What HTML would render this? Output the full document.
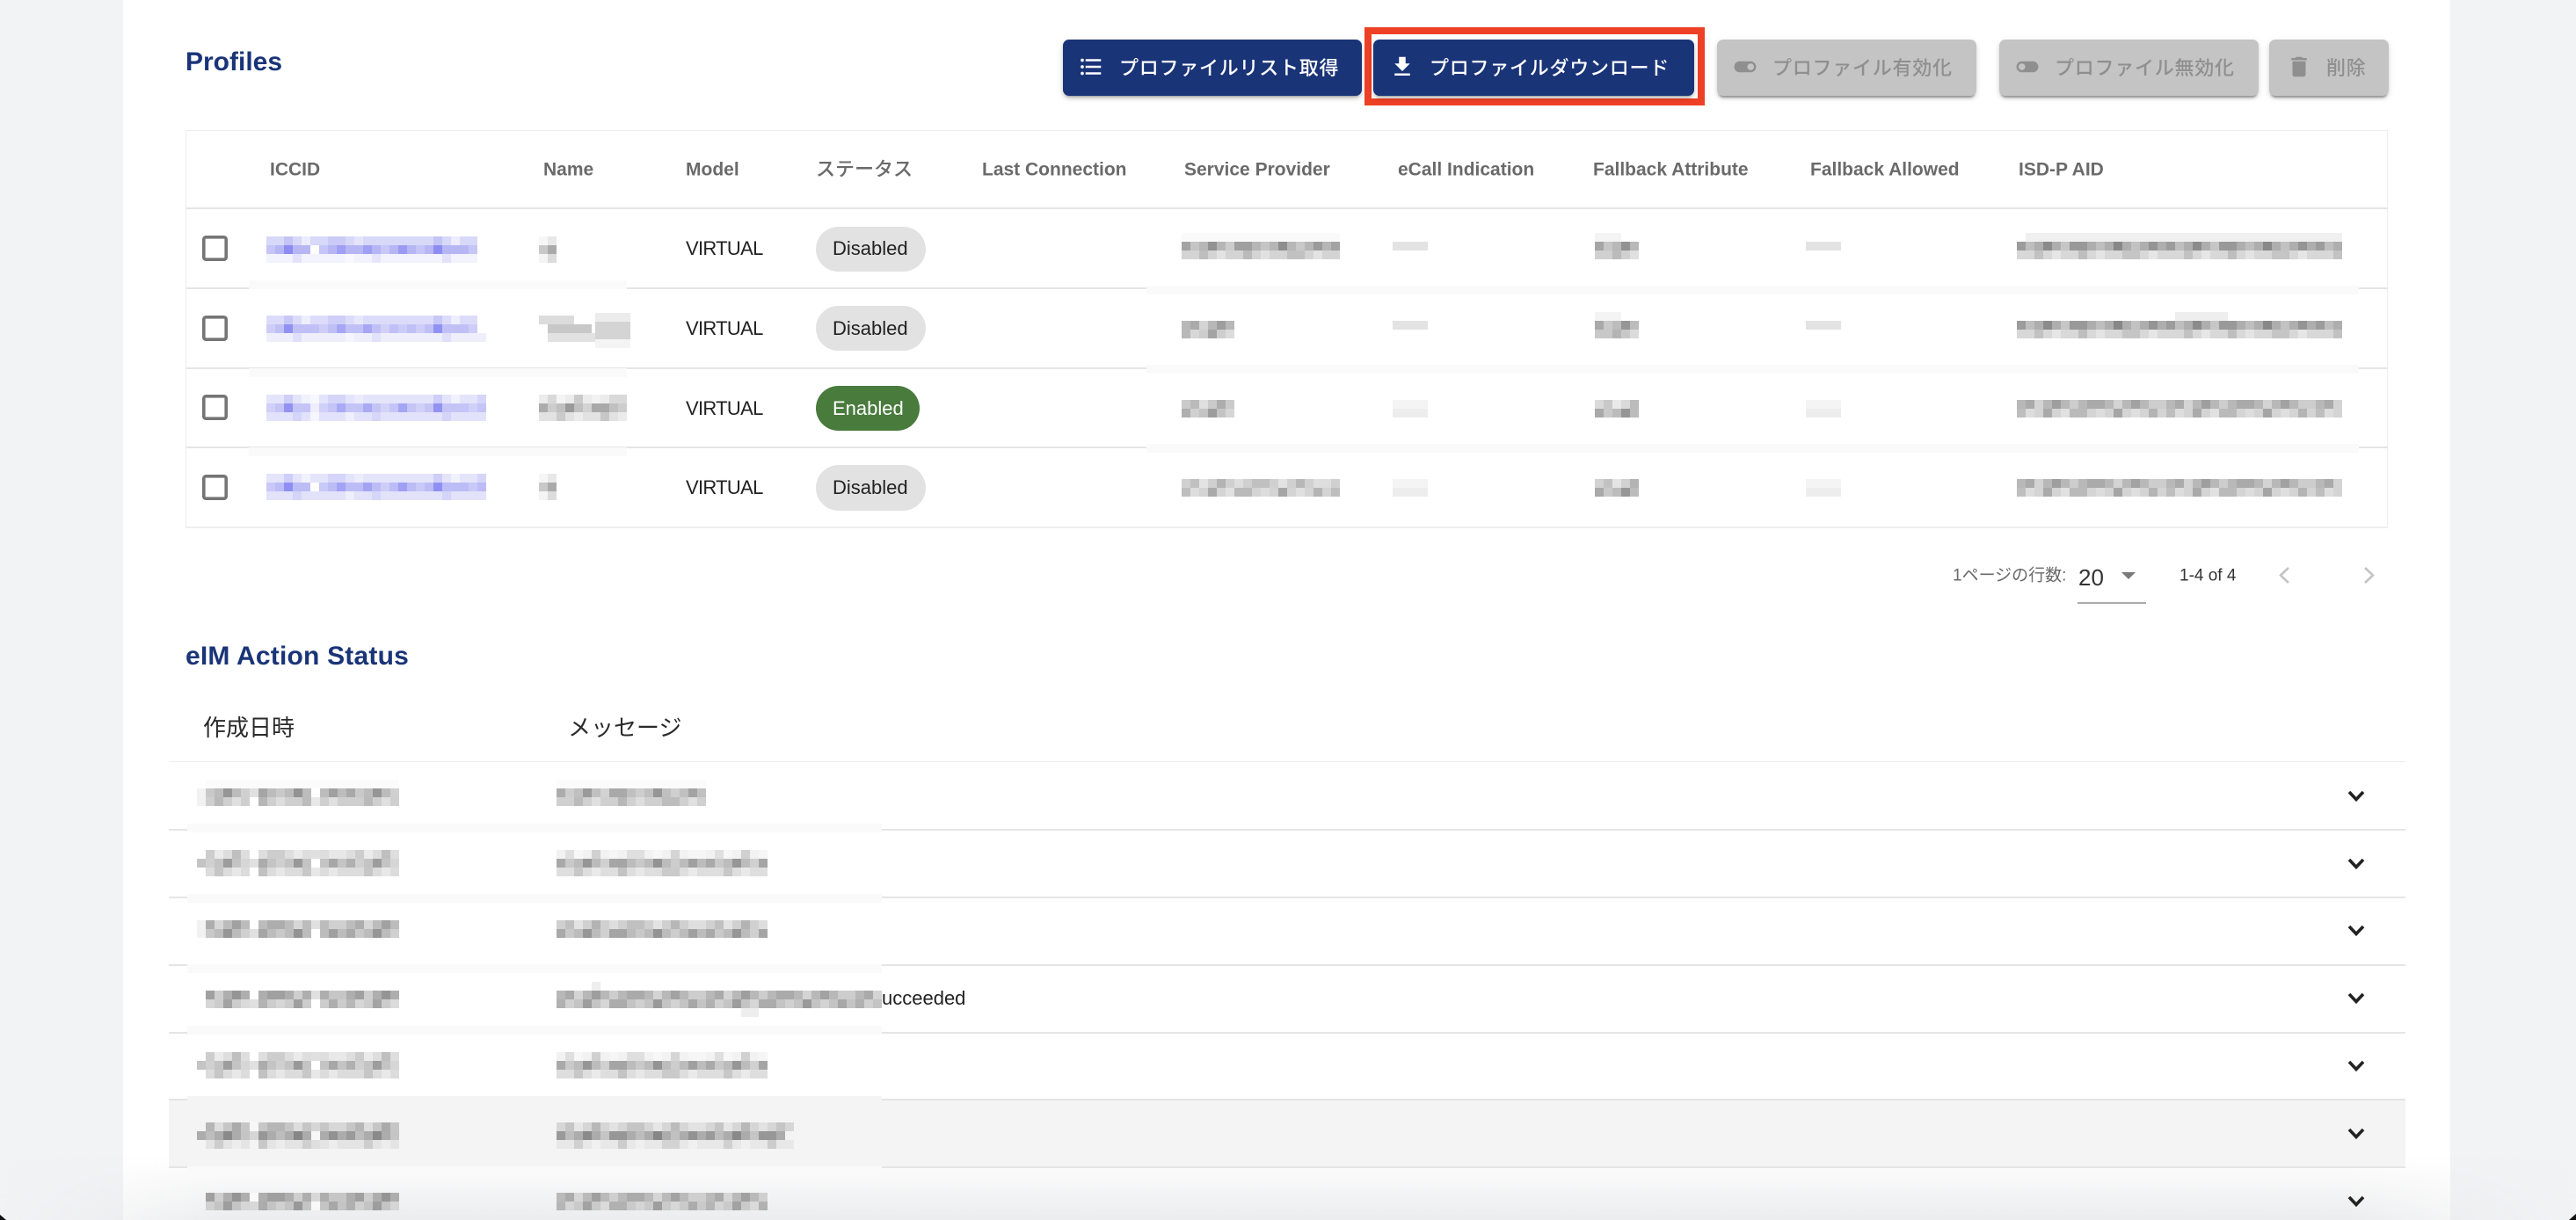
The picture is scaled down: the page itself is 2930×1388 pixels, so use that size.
<!DOCTYPE html>
<html lang="ja"><head><meta charset="utf-8"><title>Profiles</title>
<style>
html,body{margin:0;padding:0;width:2930px;height:1388px;overflow:hidden;background:#f2f3f5}
body{position:relative;font-family:"Liberation Sans","Noto Sans CJK JP",sans-serif}
#panel{position:absolute;left:140px;top:0;width:2647px;height:1388px;background:#fff}
svg.l{position:absolute;left:0;top:0}
.t{position:absolute;white-space:nowrap;line-height:1;transform:translateY(-50%);filter:blur(.35px)}
.h{font-weight:700;font-size:30px;color:#1a3478}
.c{font-weight:700;font-size:21px;color:#6a6a6a;top:193px}
.v{font-size:22px;color:#222;left:780px;letter-spacing:-.7px}
.k{font-size:22px;color:#222;left:947px}
.b{position:absolute;top:45px;height:64px;border-radius:7px;background:#1a3478;box-shadow:0 4px 2px -3px rgba(0,0,0,.25),0 3px 4px rgba(0,0,0,.14),0 2px 9px rgba(0,0,0,.1)}
.b.d{background:#c4c4c4;box-shadow:0 4px 2px -2px rgba(0,0,0,.32),0 3px 4px rgba(0,0,0,.12),0 2px 9px rgba(0,0,0,.08)}
.bt{font-weight:500;font-size:22px;letter-spacing:.75px;color:#fff;top:78px}
.bt.d{color:#8f8f8f}
.i{position:absolute;top:61px}
.ah{font-size:26px;color:#2a2a2a;top:827px}
#red{position:absolute;left:1552px;top:31px;width:371px;height:73px;border:8px solid #ee4026;box-sizing:content-box}
#fade{position:absolute;left:0;top:1315px;width:2930px;height:73px;background:linear-gradient(to bottom,rgba(232,233,235,0),rgba(232,233,235,.85));-webkit-mask-image:linear-gradient(to right,transparent 0,#000 260px,#000 2670px,transparent 2930px);mask-image:linear-gradient(to right,transparent 0,#000 260px,#000 2670px,transparent 2930px)}
</style></head><body>
<div id="panel"></div>
<div id="fade"></div>
<svg class="l" width="2930" height="1388" viewBox="0 0 2930 1388" xmlns="http://www.w3.org/2000/svg">
<defs>
<pattern id="n" width="170" height="30" patternUnits="userSpaceOnUse">
<g fill="#000"><rect x="10" y="0" width="10" height="10" opacity=".08"/><rect x="40" y="0" width="10" height="10" opacity=".14"/><rect x="80" y="0" width="20" height="10" opacity=".08"/><rect x="130" y="0" width="10" height="10" opacity=".12"/><rect x="0" y="10" width="10" height="10" opacity=".1"/><rect x="30" y="10" width="10" height="10" opacity=".2"/><rect x="60" y="10" width="20" height="10" opacity=".12"/><rect x="110" y="10" width="10" height="10" opacity=".22"/><rect x="150" y="10" width="10" height="10" opacity=".15"/><rect x="20" y="20" width="10" height="10" opacity=".1"/><rect x="70" y="20" width="10" height="10" opacity=".12"/><rect x="120" y="20" width="20" height="10" opacity=".09"/></g>
<g fill="#fff"><rect x="20" y="0" width="10" height="10" opacity=".4"/><rect x="60" y="0" width="10" height="10" opacity=".3"/><rect x="110" y="0" width="10" height="10" opacity=".4"/><rect x="150" y="0" width="20" height="10" opacity=".3"/><rect x="10" y="10" width="10" height="10" opacity=".2"/><rect x="50" y="10" width="10" height="10" opacity=".3"/><rect x="90" y="10" width="10" height="10" opacity=".2"/><rect x="130" y="10" width="10" height="10" opacity=".25"/><rect x="40" y="20" width="10" height="10" opacity=".35"/><rect x="90" y="20" width="10" height="10" opacity=".3"/><rect x="150" y="20" width="10" height="10" opacity=".35"/></g>
</pattern>
<pattern id="u" width="170" height="30" patternUnits="userSpaceOnUse">
<g fill="#6a6af0"><rect x="20" y="0" width="10" height="10" opacity=".18"/><rect x="70" y="0" width="20" height="10" opacity=".12"/><rect x="20" y="10" width="10" height="10" opacity=".55"/><rect x="80" y="10" width="10" height="10" opacity=".3"/><rect x="110" y="10" width="10" height="10" opacity=".3"/><rect x="150" y="10" width="10" height="10" opacity=".35"/><rect x="30" y="20" width="10" height="10" opacity=".12"/><rect x="120" y="20" width="10" height="10" opacity=".1"/></g>
<g fill="#fff"><rect x="40" y="0" width="10" height="10" opacity=".5"/><rect x="100" y="0" width="10" height="10" opacity=".3"/><rect x="0" y="10" width="10" height="10" opacity=".2"/><rect x="60" y="10" width="10" height="10" opacity=".2"/><rect x="130" y="10" width="10" height="10" opacity=".25"/><rect x="90" y="20" width="10" height="10" opacity=".4"/></g>
</pattern>
</defs>
<!-- table frame -->
<rect x="211.5" y="148.5" width="2504" height="451" fill="#fff" stroke="#eee"/>
<g fill="#e5e5e5"><rect x="212" y="236" width="2504" height="2"/><rect x="212" y="327" width="2504" height="2"/><rect x="212" y="418" width="2504" height="2"/><rect x="212" y="508" width="2504" height="2"/></g>
<rect x="211" y="599" width="2505" height="2" fill="#eee"/>
<!-- bands on table -->
<g fill="#fafafa"><rect x="283" y="319" width="430" height="10"/><rect x="283" y="419" width="430" height="10"/><rect x="283" y="509" width="430" height="10"/><rect x="1304" y="325" width="1379" height="10"/><rect x="1304" y="415" width="1379" height="10"/><rect x="1304" y="505" width="1379" height="10"/></g>
<!-- checkboxes -->
<g fill="none" stroke="#757575" stroke-width="3.6"><rect x="231.8" y="269.8" width="25.4" height="25.4" rx="2.5"/><rect x="231.8" y="360.8" width="25.4" height="25.4" rx="2.5"/><rect x="231.8" y="450.8" width="25.4" height="25.4" rx="2.5"/><rect x="231.8" y="541.8" width="25.4" height="25.4" rx="2.5"/></g>
<!-- chips -->
<rect x="928" y="258" width="125" height="51" rx="25.5" fill="#e2e2e2"/>
<rect x="928" y="348" width="125" height="51" rx="25.5" fill="#e2e2e2"/>
<rect x="928" y="439" width="118" height="51" rx="25.5" fill="#487b3c"/>
<rect x="928" y="529" width="125" height="52" rx="26" fill="#e2e2e2"/>
<!-- ICCID mosaics -->
<g transform="translate(303,269)"><rect width="240" height="10" fill="#d8d8f9"/><rect y="10" width="240" height="10" fill="#b6b6f5"/><rect y="20" width="240" height="10" fill="#f3f3fd"/><rect x="50" y="10" width="10" height="10" fill="#fff"/><rect width="240" height="30" fill="url(#u)"/></g>
<g transform="translate(303,359)"><rect width="240" height="10" fill="#dcdcfa"/><rect y="10" width="240" height="10" fill="#c0c0f6"/><rect y="20" width="250" height="10" fill="#efeffc"/><rect x="150" y="10" width="10" height="10" fill="#fff"/><rect width="240" height="30" fill="url(#u)"/></g>
<g transform="translate(303,449)"><rect width="250" height="10" fill="#e4e4fb"/><rect y="10" width="250" height="10" fill="#c4c4f7"/><rect y="20" width="250" height="10" fill="#e2e2fa"/><rect x="50" width="10" height="30" fill="#fff" opacity=".7"/><rect width="250" height="30" fill="url(#u)"/></g>
<g transform="translate(303,539)"><rect width="250" height="10" fill="#e4e4fb"/><rect y="10" width="250" height="10" fill="#bcbcf6"/><rect y="20" width="250" height="10" fill="#e2e2fa"/><rect x="50" y="10" width="10" height="10" fill="#fff"/><rect width="250" height="30" fill="url(#u)"/></g>
<!-- Name mosaics -->
<g transform="translate(613,269)"><rect width="10" height="10" fill="#f6f6f6"/><rect x="10" width="10" height="10" fill="#e8e8e8"/><rect y="10" width="10" height="10" fill="#c8c8c8"/><rect x="10" y="10" width="10" height="10" fill="#aaa"/><rect y="20" width="10" height="10" fill="#f4f4f4"/><rect x="10" y="20" width="10" height="10" fill="#dcdcdc"/></g>
<g transform="translate(613,359)"><rect x="0" width="40" height="10" fill="#dcdcdc"/><rect x="10" y="10" width="50" height="10" fill="#c8c8c8"/><rect x="10" y="20" width="60" height="10" fill="#e2e2e2"/><rect x="64" y="-3" width="40" height="10" fill="#ececec"/><rect x="64" y="7" width="40" height="20" fill="#d4d4d4"/><rect x="64" y="27" width="40" height="10" fill="#f4f4f4"/></g>
<g transform="translate(613,449)"><rect width="100" height="10" fill="#ececec"/><rect y="10" width="100" height="10" fill="#c0c0c0"/><rect y="20" width="100" height="10" fill="#e2e2e2"/><rect width="100" height="30" fill="url(#n)"/></g>
<g transform="translate(613,539)"><rect width="10" height="10" fill="#f6f6f6"/><rect x="10" width="10" height="10" fill="#e8e8e8"/><rect y="10" width="10" height="10" fill="#c8c8c8"/><rect x="10" y="10" width="10" height="10" fill="#aaa"/><rect y="20" width="10" height="10" fill="#f4f4f4"/><rect x="10" y="20" width="10" height="10" fill="#dcdcdc"/></g>
<!-- Service provider -->
<g transform="translate(1344,265)"><rect y="0" width="180" height="10" fill="#fafafa"/><rect y="10" width="180" height="10" fill="#b6b6b6"/><rect y="20" width="180" height="10" fill="#d4d4d4"/><rect y="10" width="180" height="20" fill="url(#n)"/></g>
<g transform="translate(1344,365)"><rect width="60" height="10" fill="#b8b8b8"/><rect y="10" width="60" height="10" fill="#cdcdcd"/><rect width="60" height="20" fill="url(#n)"/></g>
<g transform="translate(1344,455)"><rect width="60" height="10" fill="#cacaca"/><rect y="10" width="60" height="10" fill="#c4c4c4"/><rect width="60" height="20" fill="url(#n)"/></g>
<g transform="translate(1344,545)"><rect width="180" height="10" fill="#d0d0d0"/><rect y="10" width="180" height="10" fill="#d4d4d4"/><rect width="180" height="20" fill="url(#n)"/></g>
<!-- eCall + fallback allowed -->
<g fill="#e3e3e3"><rect x="1584" y="275" width="40" height="10"/><rect x="1584" y="365" width="40" height="10"/><rect x="2054" y="275" width="40" height="10"/><rect x="2054" y="365" width="40" height="10"/></g>
<g fill="#f4f4f4"><rect x="1584" y="455" width="40" height="10"/><rect x="1584" y="545" width="40" height="10"/><rect x="2054" y="455" width="40" height="10"/><rect x="2054" y="545" width="40" height="10"/></g>
<g fill="#ededed"><rect x="1584" y="465" width="40" height="10"/><rect x="1584" y="555" width="40" height="10"/><rect x="2054" y="465" width="40" height="10"/><rect x="2054" y="555" width="40" height="10"/></g>
<!-- fallback attr -->
<g transform="translate(1814,265)"><rect width="30" height="10" fill="#f4f4f4"/><rect y="10" width="50" height="10" fill="#b8b8b8"/><rect y="20" width="50" height="10" fill="#d0d0d0"/><rect y="10" width="50" height="20" fill="url(#n)"/></g>
<g transform="translate(1814,355)"><rect width="30" height="10" fill="#f4f4f4"/><rect y="10" width="50" height="10" fill="#bcbcbc"/><rect y="20" width="50" height="10" fill="#c8c8c8"/><rect y="10" width="50" height="20" fill="url(#n)"/></g>
<g transform="translate(1814,455)"><rect width="50" height="10" fill="#dadada"/><rect y="10" width="50" height="10" fill="#bcbcbc"/><rect width="50" height="20" fill="url(#n)"/></g>
<g transform="translate(1814,545)"><rect width="50" height="10" fill="#d2d2d2"/><rect y="10" width="50" height="10" fill="#bcbcbc"/><rect width="50" height="20" fill="url(#n)"/></g>
<!-- ISD-P -->
<g transform="translate(2294,265)"><rect x="10" width="360" height="10" fill="#f0f0f0"/><rect y="10" width="370" height="10" fill="#aeaeae"/><rect y="20" width="370" height="10" fill="#d8d8d8"/><rect y="10" width="370" height="20" fill="url(#n)"/></g>
<g transform="translate(2294,355)"><rect x="180" width="60" height="10" fill="#eee"/><rect y="10" width="370" height="10" fill="#aeaeae"/><rect y="20" width="370" height="10" fill="#d8d8d8"/><rect y="10" width="370" height="20" fill="url(#n)"/></g>
<g transform="translate(2294,455)"><rect width="370" height="10" fill="#b8b8b8"/><rect y="10" width="370" height="10" fill="#d4d4d4"/><rect width="370" height="20" fill="url(#n)"/></g>
<g transform="translate(2294,545)"><rect width="370" height="10" fill="#b8b8b8"/><rect y="10" width="370" height="10" fill="#d4d4d4"/><rect width="370" height="20" fill="url(#n)"/></g>
<!-- pagination -->
<path d="M2413 651h16l-8 8z" fill="#7a7a7a"/>
<rect x="2363" y="685" width="78" height="2" fill="#aaa"/>
<path d="M2603 646l-9 8.5 9 8.5M2690 646l9 8.5-9 8.5" fill="none" stroke="#c4c4c4" stroke-width="2.6"/>
<!-- accordion -->
<rect x="192" y="1251" width="2544" height="77" fill="#f4f4f4"/>
<rect x="192" y="866" width="2544" height="1" fill="#eee"/>
<g fill="#e5e5e5"><rect x="192" y="943" width="2544" height="2"/><rect x="192" y="1020" width="2544" height="2"/><rect x="192" y="1097" width="2544" height="2"/><rect x="192" y="1174" width="2544" height="2"/><rect x="192" y="1250" width="2544" height="2"/><rect x="192" y="1327" width="2544" height="2"/></g>
<g fill="#fafafa"><rect x="213" y="937" width="790" height="10"/><rect x="213" y="1017" width="790" height="10"/><rect x="213" y="1097" width="790" height="10"/><rect x="213" y="1167" width="790" height="10"/><rect x="213" y="1327" width="790" height="10"/></g>
<rect x="213" y="1247" width="790" height="10" fill="#f4f4f4"/>
<!-- date mosaics -->
<g transform="translate(224,887)"><rect x="10" width="220" height="10" fill="#fbfbfb"/><rect x="10" y="10" width="220" height="10" fill="#bcbcbc"/><rect x="10" y="20" width="220" height="10" fill="#cfcfcf"/><rect width="10" y="10" height="20" fill="#f2f2f2"/><rect x="60" y="10" width="10" height="20" fill="#fff"/><rect x="130" y="10" width="10" height="20" fill="#fff"/><rect x="10" width="220" y="10" height="20" fill="url(#n)"/></g>
<g transform="translate(224,967)"><rect x="10" width="220" height="10" fill="#dedede"/><rect y="10" width="230" height="10" fill="#c4c4c4"/><rect x="10" y="20" width="220" height="10" fill="#dcdcdc"/><rect x="60" width="10" height="30" fill="#fff"/><rect x="130" width="10" height="30" fill="#fff"/><rect x="10" width="220" height="30" fill="url(#n)"/></g>
<g transform="translate(224,1047)"><rect width="230" height="10" fill="#bcbcbc"/><rect y="10" width="230" height="10" fill="#bcbcbc"/><rect width="10" height="20" fill="#f2f2f2"/><rect x="60" width="10" height="20" fill="#fff"/><rect x="130" width="10" height="20" fill="#fff"/><rect x="10" width="220" height="20" fill="url(#n)"/></g>
<g transform="translate(224,1127)"><rect x="10" width="220" height="10" fill="#aeaeae"/><rect x="10" y="10" width="220" height="10" fill="#cccccc"/><rect x="60" width="10" height="20" fill="#fff"/><rect x="130" width="10" height="20" fill="#fff"/><rect x="10" width="220" height="20" fill="url(#n)"/></g>
<g transform="translate(224,1197)"><rect x="10" width="220" height="10" fill="#dedede"/><rect y="10" width="230" height="10" fill="#c4c4c4"/><rect x="10" y="20" width="220" height="10" fill="#dcdcdc"/><rect x="60" width="10" height="30" fill="#fff"/><rect x="130" width="10" height="30" fill="#fff"/><rect x="10" width="220" height="30" fill="url(#n)"/></g>
<g transform="translate(224,1277)"><rect x="10" width="220" height="10" fill="#c6c6c6"/><rect y="10" width="230" height="10" fill="#acacac"/><rect x="10" y="20" width="220" height="10" fill="#e4e4e4"/><rect x="60" width="10" height="30" fill="#f4f4f4"/><rect x="130" width="10" height="30" fill="#f4f4f4"/><rect x="10" width="220" height="30" fill="url(#n)"/></g>
<g transform="translate(224,1357)"><rect x="10" width="220" height="10" fill="#aeaeae"/><rect x="10" y="10" width="220" height="10" fill="#c4c4c4"/><rect x="60" width="10" height="20" fill="#f6f6f6"/><rect x="130" width="10" height="20" fill="#f6f6f6"/><rect x="10" width="220" height="20" fill="url(#n)"/></g>
<!-- message mosaics -->
<g transform="translate(633,887)"><rect width="170" height="10" fill="#fbfbfb"/><rect y="10" width="170" height="10" fill="#c0c0c0"/><rect y="20" width="170" height="10" fill="#d0d0d0"/><rect y="10" width="170" height="20" fill="url(#n)"/></g>
<g transform="translate(633,967)"><rect width="240" height="10" fill="#f2f2f2"/><rect y="10" width="240" height="10" fill="#bcbcbc"/><rect y="20" width="240" height="10" fill="#dedede"/><rect width="240" height="30" fill="url(#n)"/></g>
<g transform="translate(633,1047)"><rect width="240" height="10" fill="#d0d0d0"/><rect y="10" width="240" height="10" fill="#bcbcbc"/><rect width="240" height="20" fill="url(#n)"/></g>
<g transform="translate(633,1127)"><rect width="370" height="10" fill="#b8b8b8"/><rect y="10" width="370" height="10" fill="#c4c4c4"/><rect width="370" height="20" fill="url(#n)"/><rect x="40" y="-10" width="10" height="10" fill="#eee"/><rect x="210" y="20" width="20" height="10" fill="#eee"/></g>
<g transform="translate(633,1197)"><rect width="240" height="10" fill="#f2f2f2"/><rect y="10" width="240" height="10" fill="#bcbcbc"/><rect y="20" width="240" height="10" fill="#dedede"/><rect width="240" height="30" fill="url(#n)"/></g>
<g transform="translate(633,1277)"><rect width="270" height="10" fill="#d6d6d6"/><rect y="10" width="260" height="10" fill="#acacac"/><rect y="20" width="270" height="10" fill="#e8e8e8"/><rect width="260" height="30" fill="url(#n)"/></g>
<g transform="translate(633,1357)"><rect width="240" height="10" fill="#bababa"/><rect y="10" width="240" height="10" fill="#cacaca"/><rect width="240" height="20" fill="url(#n)"/></g>
<!-- accordion chevrons -->
<g fill="none" stroke="#222" stroke-width="3.6"><path d="M2672 901l8 8.5 8-8.5"/><path d="M2672 978l8 8.5 8-8.5"/><path d="M2672 1054l8 8.5 8-8.5"/><path d="M2672 1131l8 8.5 8-8.5"/><path d="M2672 1208l8 8.5 8-8.5"/><path d="M2672 1285l8 8.5 8-8.5"/><path d="M2672 1362l8 8.5 8-8.5"/></g>
</svg>

<!-- buttons -->
<div class="b" style="left:1209px;width:340px"></div>
<div id="red"></div>
<div class="b" style="left:1562px;width:365px"></div>
<div class="b d" style="left:1953px;width:295px"></div>
<div class="b d" style="left:2274px;width:295px"></div>
<div class="b d" style="left:2581px;width:136px"></div>
<svg class="i" style="left:1226px" width="30" height="30" viewBox="0 0 24 24" fill="#fff"><path d="M4 10.5c-.83 0-1.5.67-1.5 1.5s.67 1.5 1.5 1.5 1.5-.67 1.5-1.5-.67-1.5-1.5-1.5zm0-6c-.83 0-1.5.67-1.5 1.5S3.17 7.5 4 7.5 5.5 6.83 5.5 6 4.83 4.5 4 4.5zm0 12c-.83 0-1.5.68-1.5 1.5s.68 1.5 1.5 1.5 1.5-.68 1.5-1.5-.67-1.5-1.5-1.5zM7 19h14v-2H7v2zm0-6h14v-2H7v2zm0-8v2h14V5H7z"/></svg>
<svg class="i" style="left:1580px" width="30" height="30" viewBox="0 0 24 24" fill="#fff"><path d="M5 20h14v-2H5v2zM19 9h-4V3H9v6H5l7 7 7-7z"/></svg>
<svg class="i" style="left:1970px" width="30" height="30" viewBox="0 0 24 24" fill="#8f8f8f"><path d="M17 7H7c-2.76 0-5 2.24-5 5s2.24 5 5 5h10c2.76 0 5-2.24 5-5s-2.24-5-5-5zm0 8c-1.66 0-3-1.34-3-3s1.34-3 3-3 3 1.34 3 3-1.34 3-3 3z"/></svg>
<svg class="i" style="left:2291px" width="30" height="30" viewBox="0 0 24 24" fill="#8f8f8f"><path d="M17 7H7c-2.76 0-5 2.24-5 5s2.24 5 5 5h10c2.76 0 5-2.24 5-5s-2.24-5-5-5zM7 15c-1.66 0-3-1.34-3-3s1.34-3 3-3 3 1.34 3 3-1.34 3-3 3z"/></svg>
<svg class="i" style="left:2600px" width="30" height="30" viewBox="0 0 24 24" fill="#8f8f8f"><path d="M6 19c0 1.1.9 2 2 2h8c1.1 0 2-.9 2-2V7H6v12zM19 4h-3.5l-1-1h-5l-1 1H5v2h14V4z"/></svg>
<div class="t bt" style="left:1273px">プロファイルリスト取得</div>
<div class="t bt" style="left:1626px">プロファイルダウンロード</div>
<div class="t bt d" style="left:2016px">プロファイル有効化</div>
<div class="t bt d" style="left:2337px">プロファイル無効化</div>
<div class="t bt d" style="left:2646px">削除</div>

<div class="t h" style="left:211px;top:71px">Profiles</div>
<div class="t c" style="left:307px">ICCID</div>
<div class="t c" style="left:618px">Name</div>
<div class="t c" style="left:780px">Model</div>
<div class="t c" style="left:928px;font-size:22px;font-weight:500">ステータス</div>
<div class="t c" style="left:1117px">Last Connection</div>
<div class="t c" style="left:1347px">Service Provider</div>
<div class="t c" style="left:1590px">eCall Indication</div>
<div class="t c" style="left:1812px">Fallback Attribute</div>
<div class="t c" style="left:2059px">Fallback Allowed</div>
<div class="t c" style="left:2296px">ISD-P AID</div>

<div class="t v" style="top:283px">VIRTUAL</div>
<div class="t v" style="top:374px">VIRTUAL</div>
<div class="t v" style="top:465px">VIRTUAL</div>
<div class="t v" style="top:555px">VIRTUAL</div>
<div class="t k" style="top:283px">Disabled</div>
<div class="t k" style="top:374px">Disabled</div>
<div class="t k" style="top:465px;color:#fff">Enabled</div>
<div class="t k" style="top:555px">Disabled</div>

<div class="t" style="left:2221px;top:655px;font-size:19px;color:#6a6a6a">1ページの行数:</div>
<div class="t" style="left:2364px;top:657px;font-size:26px;color:#333">20</div>
<div class="t" style="left:2479px;top:655px;font-size:19px;color:#333">1-4 of 4</div>

<div class="t h" style="left:211px;top:747px;letter-spacing:.2px">eIM Action Status</div>
<div class="t ah" style="left:231px;top:828px">作成日時</div>
<div class="t ah" style="left:646px;top:828px">メッセージ</div>
<div class="t" style="left:1003px;top:1136px;font-size:22px;color:#222">ucceeded</div>
<svg class="l" width="2930" height="1388" viewBox="0 0 2930 1388"><path d="M2930 1381v7h-8zM0 1382v6h7z" fill="#111"/></svg>
</body></html>
